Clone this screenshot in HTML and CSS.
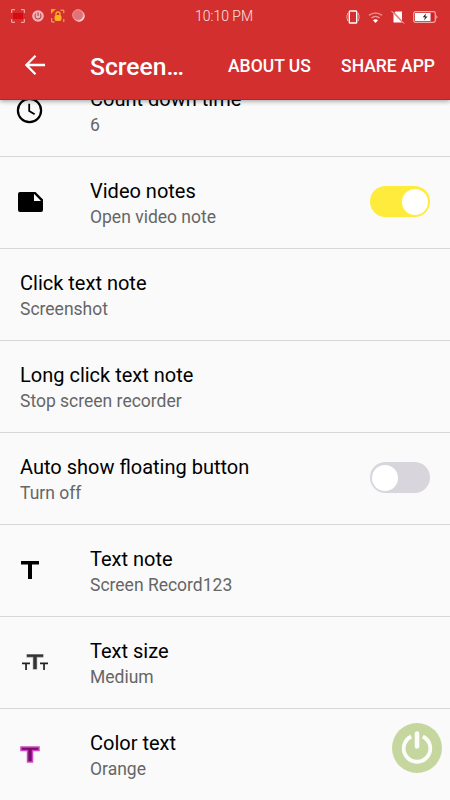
FILE: index.html
```html
<!DOCTYPE html>
<html lang="en">
<head>
<meta charset="utf-8">
<title>Screen Recorder</title>
<link rel="stylesheet" href="styles.css">
</head>
<body>
<div class="screen">
  <header class="top">
    <div class="status">
      <div class="status-left">
        <svg width="14" height="14" viewBox="0 0 14 14"><rect x="2" y="4" width="10" height="6" fill="#d90b10"/><path d="M.7 4V.7H4M10 .7h3.300V4M13.300 10v3.300H10M4 13.300H.7V10" fill="none" stroke="#f6bdbb"/></svg>
        <svg width="12" height="12" viewBox="0 0 12 12"><circle cx="6" cy="6" r="5.800" fill="#f1b5b5"/><path d="M4 3.700a3 3 0 1 0 4 0M6 2.300v3.600" fill="none" stroke="#b84349" stroke-width="1.100"/></svg>
        <svg width="14" height="14" viewBox="0 0 14 14"><path d="M0 0h5L0 5z" fill="#f6a21a"/><path d="M9.500 1.200h3.300v3M12.800 10v3M.7 9v4h3" fill="none" stroke="#f3b36f"/><rect x="3.500" y="6" width="7" height="6" rx="2" fill="#fdb022"/><path d="M5 6.500V5a2 2 0 0 1 4 0v1.500" fill="none" stroke="#fdb022" stroke-width="1.300"/></svg>
        <svg width="13" height="13" viewBox="0 0 13 13"><circle cx="7" cy="7" r="5.700" fill="#fbe4e2"/><circle cx="6" cy="6" r="5.400" fill="#e37376" stroke="#efa3a3" stroke-width=".8"/></svg>
      </div>
      <span class="clock">10:10 PM</span>
      <div class="status-right">
        <svg width="14" height="14" viewBox="0 0 14 14"><rect x="3.300" y="1" width="7.400" height="12" rx=".8" fill="none" stroke="#fff" stroke-width="1.400"/><path d="M1.500 3v2l-1 1 1 1-1 1 1 1v2M12.500 3v2l1 1-1 1 1 1-1 1v2" fill="none" stroke="#f0b0af" stroke-width=".9"/></svg>
        <svg width="15" height="12" viewBox="0 0 15 12"><path d="M1 4.400a10 10 0 0 1 13 0" fill="none" stroke="#e58a8a" stroke-width="1.500"/><path d="M3.500 7a6 6 0 0 1 8 0" fill="none" stroke="#e99c9b" stroke-width="1.500"/><path d="M5 9.300a4 4 0 0 1 5 0L7.500 12z" fill="#fff"/></svg>
        <svg width="14" height="14" viewBox="0 0 14 14"><path d="M2.500 3.600 11 12.500H2.500zM4.500 1.500H11v9L3.500 2.500z" fill="#fff"/><path d="m.5 1 12.500 12.500" stroke="#f7cfcd" stroke-width="1"/></svg>
        <svg width="25" height="12" viewBox="0 0 25 12"><rect x=".7" y=".7" width="21.600" height="10.600" rx="1.700" fill="none" stroke="#efaaaa" stroke-width="1.200"/><path d="M23.300 4v4l1.400-2z" fill="#efaaaa"/><path d="M2 2h15.500v8H2z" fill="#fff"/><path d="M18 2h3v8h-3z" fill="#d91f24"/><path d="m13 2.500-3.300 3.800H12L11 9.500l3.500-4h-2.200z" fill="#222"/></svg>
      </div>
    </div>
    <div class="bar">
      <svg class="back" width="20" height="20" viewBox="0 0 20 20"><path d="M20 10H1.500M10.500.8 1.400 10l9.100 9.200" fill="none" stroke="#fff" stroke-width="2.300"/></svg>
      <h1 class="title">Screen…</h1>
      <span class="action about">ABOUT US</span>
      <span class="action share">SHARE APP</span>
    </div>
  </header>
  <main class="list">
    <section class="row">
      <div class="icon"><svg width="27" height="27" viewBox="0 0 27 27"><circle cx="13.500" cy="13.500" r="11.600" fill="none" stroke="#000" stroke-width="2.200"/><path d="M13.200 6.800v7.100l5.400 3.300" fill="none" stroke="#000" stroke-width="1.800"/></svg></div>
      <div class="text"><div class="name">Count down time</div><div class="value">6</div></div>
    </section>
    <section class="row">
      <div class="icon"><svg class="note" width="25" height="20" viewBox="0 0 25 20"><path fill-rule="evenodd" d="M2 0h15.500L25 7.500V18a2 2 0 0 1-2 2H2a2 2 0 0 1-2-2V2a2 2 0 0 1 2-2zm14 1.800V9h7z"/></svg></div>
      <div class="text"><div class="name">Video notes</div><div class="value">Open video note</div></div>
      <div class="switch on"><span class="knob"></span></div>
    </section>
    <section class="row">
      <div class="text"><div class="name">Click text note</div><div class="value">Screenshot</div></div>
    </section>
    <section class="row">
      <div class="text"><div class="name">Long click text note</div><div class="value">Stop screen recorder</div></div>
    </section>
    <section class="row">
      <div class="text"><div class="name">Auto show floating button</div><div class="value">Turn off</div></div>
      <div class="switch"><span class="knob"></span></div>
    </section>
    <section class="row">
      <div class="icon"><svg class="tee" width="18" height="18" viewBox="0 0 18 18"><path d="M0 0h18v3.600h-7V18H7V3.600H0z"/></svg></div>
      <div class="text"><div class="name">Text note</div><div class="value">Screen Record123</div></div>
    </section>
    <section class="row">
      <div class="icon"><svg class="tees" width="26" height="16" viewBox="0 0 26 16"><path d="M4.500 0h17v3.500h-6.300V15.500h-4.400V3.500H4.500z" fill="#888"/><path d="M5 .7h16v2h-6.500V15h-3V2.700H5z" fill="#333"/><path d="M0 8.500h8v1.700H4.900V16H3.200v-5.800H0zM18 8.500h8v1.700h-3.100V16h-1.700v-5.800H18z" fill="#222"/></svg></div>
      <div class="text"><div class="name">Text size</div><div class="value">Medium</div></div>
    </section>
    <section class="row">
      <div class="icon"><svg class="tint" width="20" height="17" viewBox="0 0 20 17"><path d="M1 1h18v3.500h-6.500V16h-5V4.500H1z" fill="#790c68" stroke="#d048c4" stroke-width="1.500"/></svg></div>
      <div class="text"><div class="name">Color text</div><div class="value">Orange</div></div>
    </section>
  </main>
  <svg class="floating" width="50" height="50" viewBox="0 0 50 50"><circle cx="25" cy="25" r="25" fill="#c5d79f"/><path d="M19.200 13.500a13.300 13.300 0 1 0 11.600 0" fill="none" stroke="#fcfcfa" stroke-width="3.800"/><path d="M25 10.500v13" stroke="#fcfcfa" stroke-width="4.600" stroke-linecap="round"/></svg>
</div>
</body>
</html>
```
FILE: styles.css
```css
* { box-sizing: border-box; }
body { margin: 0; font-family: Roboto, "Liberation Sans", sans-serif; }
.screen { position: relative; width: 450px; height: 800px; overflow: hidden; background: #fafafa; }
.top {
  position: relative;
  z-index: 1;
  height: 100px;
  background: #d32f2f;
  color: #fff;
  border-bottom: 1px solid #c51f20;
  box-shadow: 0 1px 5px rgba(0, 0, 0, .4);
}
.status { display: grid; grid-template-columns: 1fr auto 1fr; align-items: center; height: 32px; }
.status-left { display: flex; align-items: center; gap: 7px; padding-left: 11px; margin-top: -1px; }
.status-right { display: flex; align-items: center; justify-content: flex-end; gap: 8px; padding-right: 12px; margin-top: 2px; }
.clock { font-size: 14px; line-height: 18px; font-weight: 300; color: #fbe3e2; margin-right: 2px; }
.bar { display: flex; align-items: center; height: 67px; padding-right: 15px; }
.back { margin: 0 0 1px 25px; flex: none; }
.title { margin: 2px 0 0 45px; width: 138px; font-size: 24.700px; line-height: 30px; font-weight: 500; }
.action { font-size: 17.500px; font-weight: 500; white-space: nowrap; }
.share { margin-left: auto; }
.list { margin-top: -35px; }
.row { display: flex; align-items: center; height: 92px; padding: 0 20px; border-bottom: 1px solid #d6d6d6; }
.icon { flex: none; width: 70px; display: flex; }
.icon svg { margin-left: -4px; }
.icon .note { margin: 0 0 1px -2px; }
.icon .tee { margin: 0 0 2px 1px; }
.icon .tees { margin: 0 0 2px 2px; }
.icon .tint { margin-left: 0; }
.text { flex: 1; white-space: nowrap; padding-top: 2px; }
.name { font-size: 20px; line-height: 26px; color: #000; }
.value { font-size: 17.500px; line-height: 26px; color: #666; }
.switch { width: 60px; height: 31px; margin-bottom: 2px; padding: 2px; border-radius: 16px; background: #d8d5dc; display: flex; align-items: center; }
.switch.on { background: #ffeb3b; justify-content: flex-end; }
.knob { width: 26px; height: 26px; border-radius: 50%; background: #fff; }
.floating { position: absolute; left: 391.500px; top: 723px; z-index: 2; }
```
